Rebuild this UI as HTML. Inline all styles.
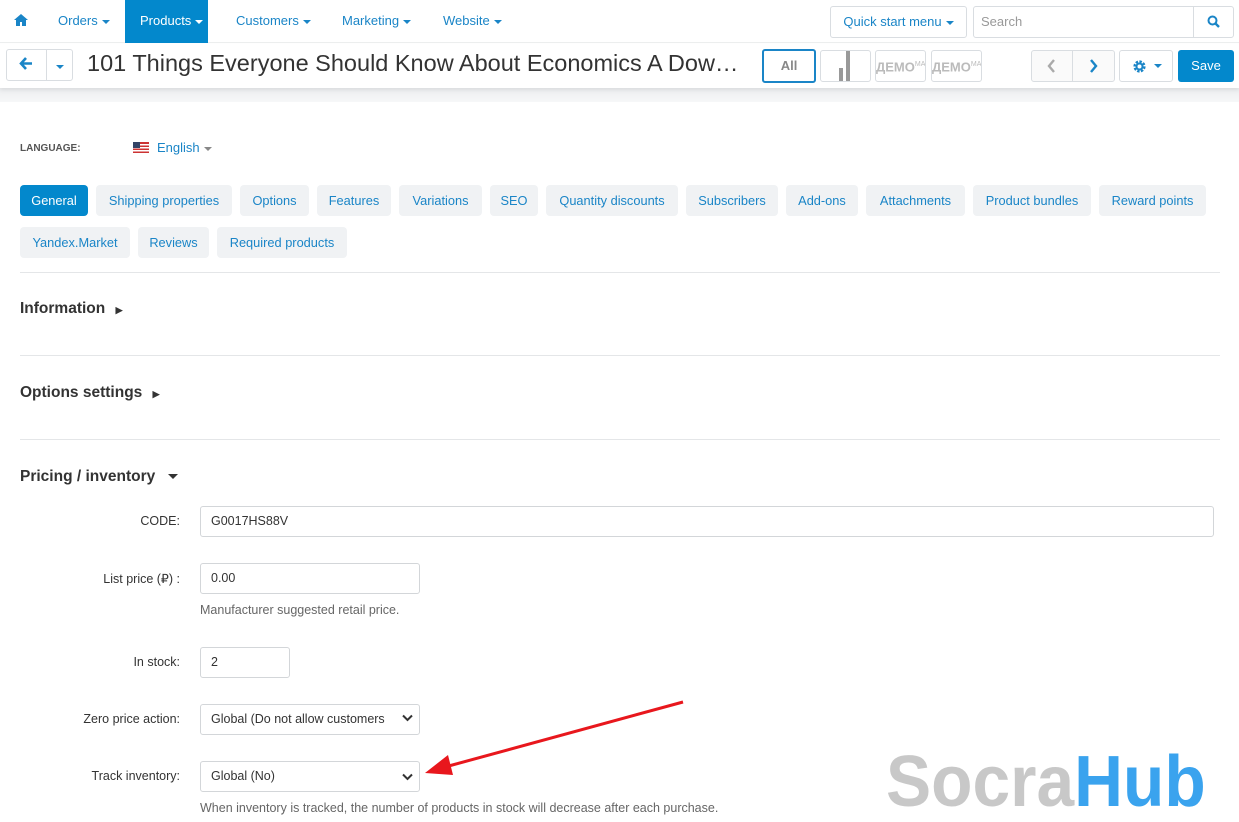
<!DOCTYPE html>
<html><head><meta charset="utf-8"><style>
*{box-sizing:border-box;margin:0;padding:0}
body{width:1239px;height:822px;overflow:hidden;background:#fff;font-family:"Liberation Sans",sans-serif;position:relative;color:#333}
.a{position:absolute}
.nav{font-size:13px;color:#1a85c7;top:13px}
.car{display:inline-block;width:0;height:0;border-left:4px solid transparent;border-right:4px solid transparent;border-top:4px solid currentColor;vertical-align:middle;margin-left:4px}
.btn{position:absolute;border:1px solid #d9dde1;border-radius:3px;background:#fff}
.tab{position:absolute;height:31px;background:#f0f2f4;border-radius:4px;color:#1a85c7;font-size:12.8px;line-height:31px;text-align:center}
.hr{position:absolute;left:20px;width:1200px;height:1px;background:#e4e6e8}
.h{position:absolute;left:20px;font-size:15.5px;font-weight:bold;color:#333}
.lbl{position:absolute;font-size:12.5px;color:#333;text-align:right;right:1059px}
.inp{position:absolute;border:1px solid #d3d6d9;border-radius:3px;height:31px;font-size:12.5px;line-height:29px;padding-left:10px;color:#333;background:#fff}
.help{position:absolute;left:200px;font-size:12.5px;color:#666}
.chev{position:absolute;right:6px;top:9px}
</style></head><body>
<div class="a" style="left:0;top:0;width:1239px;height:43px;background:#fff;border-bottom:1px solid #eceeef"></div>
<svg class="a" style="left:14px;top:14px" width="14" height="12" viewBox="0 0 14 12"><path d="M7 0L0 6h2v6h4V8h2v4h4V6h2z" fill="#1a85c7"/></svg>
<div class="a nav" style="left:58px">Orders<span class="car"></span></div>
<div class="a" style="left:125px;top:0;width:83px;height:43px;background:#0388cc"></div>
<div class="a nav" style="left:140px;color:#fff">Products<span class="car"></span></div>
<div class="a nav" style="left:236px">Customers<span class="car"></span></div>
<div class="a nav" style="left:342px">Marketing<span class="car"></span></div>
<div class="a nav" style="left:443px">Website<span class="car"></span></div>
<div class="btn" style="left:830px;top:6px;width:137px;height:32px;font-size:13px;color:#1a85c7;line-height:30px;text-align:center">Quick start menu<span class="car"></span></div>
<div class="btn" style="left:973px;top:6px;width:261px;height:32px;font-size:13px;color:#999;line-height:30px;padding-left:7px">Search</div>
<div class="a" style="left:1193px;top:7px;width:1px;height:30px;background:#d9dde1"></div>
<svg class="a" style="left:1207px;top:15px" width="13" height="13" viewBox="0 0 13 13"><circle cx="5.5" cy="5.5" r="4" fill="none" stroke="#1a85c7" stroke-width="2"/><path d="M8.5 8.5L12 12" stroke="#1a85c7" stroke-width="2.4"/></svg>
<div class="a" style="left:0;top:88px;width:1239px;height:14px;background:linear-gradient(#eceef0,#f6f7f8)"></div>
<div class="a" style="left:0;top:44px;width:1239px;height:44px;background:#fff;box-shadow:0 2px 4px rgba(0,0,0,.08)"></div>
<div class="btn" style="left:6px;top:49px;width:67px;height:32px"></div>
<div class="a" style="left:46px;top:50px;width:1px;height:30px;background:#d9dde1"></div>
<svg class="a" style="left:19px;top:57px" width="14" height="13" viewBox="0 0 14 13"><path d="M7 1L2 6.5 7 12M2 6.5h11" fill="none" stroke="#1a85c7" stroke-width="2.6"/></svg>
<div class="a" style="left:56px;top:58px;color:#1a85c7;font-size:13px"><span class="car" style="margin:0"></span></div>
<div class="a" style="left:87px;top:50px;font-size:23.5px;color:#333;white-space:nowrap">101 Things Everyone Should Know About Economics A Dow…</div>
<div class="btn" style="left:762px;top:49px;width:54px;height:34px;border:2px solid #1a85c7;font-size:13px;font-weight:bold;color:#888;text-align:center;line-height:30px">All</div>
<div class="btn" style="left:820px;top:50px;width:51px;height:32px;overflow:hidden"><div class="a" style="left:18px;top:17px;width:4px;height:15px;background:#999"></div><div class="a" style="left:25px;top:0;width:4px;height:32px;background:#999"></div></div>
<div class="btn" style="left:875px;top:50px;width:51px;height:32px;overflow:hidden;font-size:13px;font-weight:bold;color:#bbb;line-height:28px;white-space:nowrap">ДЕМО<sup style="font-size:7px;font-weight:normal">МА</sup></div>
<div class="btn" style="left:931px;top:50px;width:51px;height:32px;overflow:hidden;font-size:13px;font-weight:bold;color:#bbb;line-height:28px;white-space:nowrap">ДЕМО<sup style="font-size:7px;font-weight:normal">МА</sup></div>
<div class="btn" style="left:1031px;top:50px;width:84px;height:32px;background:#fafafa"></div>
<div class="a" style="left:1072px;top:51px;width:1px;height:30px;background:#d9dde1"></div>
<svg class="a" style="left:1047px;top:59px" width="9" height="14" viewBox="0 0 9 14"><path d="M7 1L2 7l5 6" fill="none" stroke="#aaa" stroke-width="2.4"/></svg>
<svg class="a" style="left:1089px;top:59px" width="9" height="14" viewBox="0 0 9 14"><path d="M2 1l5 6-5 6" fill="none" stroke="#1a85c7" stroke-width="2.4"/></svg>
<div class="btn" style="left:1119px;top:50px;width:54px;height:32px;color:#1a85c7"><svg class="a" style="left:13px;top:9px" width="13" height="13" viewBox="0 0 13 13"><circle cx="6.5" cy="6.5" r="4.5" fill="none" stroke="#1a85c7" stroke-width="3.2" stroke-dasharray="2.2 1.3"/><circle cx="6.5" cy="6.5" r="3" fill="none" stroke="#1a85c7" stroke-width="2"/></svg><span class="car a" style="left:30px;top:13px"></span></div>
<div class="a" style="left:1178px;top:50px;width:56px;height:32px;background:#0388cc;border-radius:3px;color:#fff;font-size:13px;text-align:center;line-height:32px">Save</div>
<div class="a" style="left:20px;top:143px;font-size:10px;font-weight:bold;color:#555">LANGUAGE:</div>
<svg class="a" style="left:133px;top:142px" width="16" height="11" viewBox="0 0 16 11"><rect width="16" height="11" fill="#c33"/><rect y="2" width="16" height="1.5" fill="#fff"/><rect y="5" width="16" height="1.5" fill="#fff"/><rect y="8" width="16" height="1.5" fill="#fff"/><rect width="7" height="6" fill="#346"/></svg>
<div class="a" style="left:157px;top:140px;font-size:13px;color:#1a85c7">English<span class="car" style="color:#888"></span></div>
<div class="tab" style="left:20px;top:185px;width:68px;background:#0388cc;color:#fff">General</div>
<div class="tab" style="left:96px;top:185px;width:136px">Shipping properties</div>
<div class="tab" style="left:240px;top:185px;width:69px">Options</div>
<div class="tab" style="left:317px;top:185px;width:74px">Features</div>
<div class="tab" style="left:399px;top:185px;width:83px">Variations</div>
<div class="tab" style="left:490px;top:185px;width:48px">SEO</div>
<div class="tab" style="left:546px;top:185px;width:132px">Quantity discounts</div>
<div class="tab" style="left:686px;top:185px;width:92px">Subscribers</div>
<div class="tab" style="left:786px;top:185px;width:72px">Add-ons</div>
<div class="tab" style="left:866px;top:185px;width:99px">Attachments</div>
<div class="tab" style="left:973px;top:185px;width:118px">Product bundles</div>
<div class="tab" style="left:1099px;top:185px;width:107px">Reward points</div>
<div class="tab" style="left:20px;top:227px;width:110px">Yandex.Market</div>
<div class="tab" style="left:138px;top:227px;width:71px">Reviews</div>
<div class="tab" style="left:217px;top:227px;width:130px">Required products</div>
<div class="hr" style="top:272px"></div>
<div class="h" style="top:300px">Information <span style="font-size:9px;margin-left:6px">▶</span></div>
<div class="hr" style="top:355px"></div>
<div class="h" style="top:384px">Options settings <span style="font-size:9px;margin-left:6px">▶</span></div>
<div class="hr" style="top:439px"></div>
<div class="h" style="top:468px">Pricing / inventory <span class="car" style="margin-left:8px;border-width:5px 5px 0"></span></div>
<div class="lbl" style="top:514px">CODE:</div>
<div class="inp" style="left:200px;top:506px;width:1014px">G0017HS88V</div>
<div class="lbl" style="top:571px">List price (₽) :</div>
<div class="inp" style="left:200px;top:563px;width:220px">0.00</div>
<div class="help" style="top:603px">Manufacturer suggested retail price.</div>
<div class="lbl" style="top:655px">In stock:</div>
<div class="inp" style="left:200px;top:647px;width:90px">2</div>
<div class="lbl" style="top:712px">Zero price action:</div>
<div class="inp" style="left:200px;top:704px;width:220px;overflow:hidden;white-space:nowrap;padding-right:24px">Global (Do not allow customers<svg class="chev" width="11" height="8" viewBox="0 0 11 8"><path d="M1 1.5l4.5 4.5L10 1.5" fill="none" stroke="#333" stroke-width="2"/></svg></div>
<div class="lbl" style="top:769px">Track inventory:</div>
<div class="inp" style="left:200px;top:761px;width:220px">Global (No)<svg class="chev" style="top:11px" width="11" height="8" viewBox="0 0 11 8"><path d="M1 1.5l4.5 4.5L10 1.5" fill="none" stroke="#333" stroke-width="2"/></svg></div>
<div class="help" style="top:801px">When inventory is tracked, the number of products in stock will decrease after each purchase.</div>
<svg class="a" style="left:420px;top:695px" width="270" height="90" viewBox="0 0 270 90"><path d="M263 7L25 72" stroke="#e8171d" stroke-width="3"/><path d="M5 78L28 60 33 80z" fill="#e8171d"/></svg>
<div class="a" style="left:886px;top:742px;font-size:72px;font-weight:bold;font-family:'Liberation Sans',sans-serif;line-height:80px;white-space:nowrap;transform:scaleX(0.94);transform-origin:left top"><span style="color:#c8c8c8">Socra</span><span style="color:#3aa3ee">Hub</span></div>
</body></html>
